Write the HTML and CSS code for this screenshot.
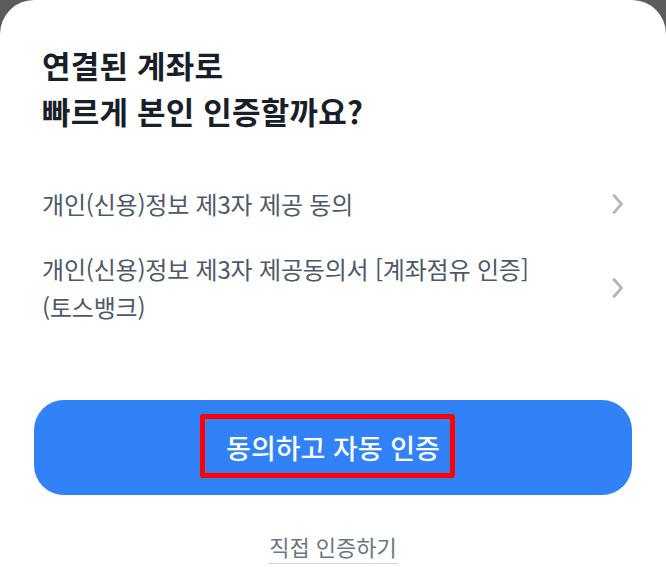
FILE: index.html
```html
<!DOCTYPE html>
<html lang="ko">
<head>
<meta charset="utf-8">
<link rel="stylesheet" href="styles.css">
</head>
<body>
<div class="sheet">
  <h1 class="title">연결된 계좌로<br>빠르게 본인 인증할까요?</h1>
  <ul class="terms">
    <li class="term">
      <span class="term-text">개인(신용)정보 제3자 제공 동의</span>
      <svg class="chev" viewBox="0 0 12 20" width="12" height="20"><path d="M2 1.5 L9.5 10 L2 18.5" fill="none" stroke="#b0b8c1" stroke-width="2.8" stroke-linecap="round" stroke-linejoin="round"/></svg>
    </li>
    <li class="term">
      <span class="term-text">개인(신용)정보 제3자 제공동의서 [계좌점유 인증] (토스뱅크)</span>
      <svg class="chev" viewBox="0 0 12 20" width="12" height="20"><path d="M2 1.5 L9.5 10 L2 18.5" fill="none" stroke="#b0b8c1" stroke-width="2.8" stroke-linecap="round" stroke-linejoin="round"/></svg>
    </li>
  </ul>
  <button class="cta">
    <span class="cta-label">동의하고 자동 인증</span>
    <span class="highlight"></span>
  </button>
  <div class="alt-wrap"><a class="alt">직접 인증하기</a></div>
</div>
</body>
</html>
```

FILE: styles.css
```css
html, body {
  margin: 0;
  padding: 0;
  background: #5c5c5c;
  height: 100%;
  overflow: hidden;
}
body {
  font-family: "Noto Sans CJK KR", "Noto Sans", sans-serif;
}
.sheet {
  background: #ffffff;
  border-radius: 34px 34px 0 0;
  height: 100vh;
  overflow: hidden;
  padding: 42px 34px 0 42px;
  box-sizing: border-box;
  display: flex;
  flex-direction: column;
}
.title {
  margin: 0;
  font-size: 31px;
  line-height: 46px;
  font-weight: 700;
  color: #191f28;
  letter-spacing: 0.2px;
}
.terms {
  list-style: none;
  margin: 51px 0 0 0;
  padding: 0;
  display: flex;
  flex-direction: column;
  gap: 27px;
}
.term {
  display: flex;
  align-items: center;
  justify-content: space-between;
  gap: 20px;
}
.term-text {
  flex: 1;
  font-size: 24px;
  line-height: 38px;
  color: #4e5968;
  word-break: keep-all;
  letter-spacing: -0.2px;
  max-width: 540px;
}
.chev {
  flex: none;
  margin-right: 8px;
}
.cta {
  position: relative;
  flex: none;
  margin: 74px 0 0 -8px;
  height: 95px;
  border: none;
  border-radius: 30px;
  background: #3182f6;
  color: #ffffff;
  font-family: inherit;
  font-size: 27px;
  font-weight: 500;
  letter-spacing: 0;
  display: flex;
  align-items: center;
  justify-content: center;
  padding: 0;
}
.highlight {
  position: absolute;
  left: 166px;
  top: 14px;
  width: 255px;
  height: 64px;
  box-sizing: border-box;
  border: 5px solid #ff0000;
  border-radius: 3px;
}
.alt-wrap {
  flex: none;
  display: flex;
  justify-content: center;
  margin: 37px 0 0 -8px;
}
.alt {
  font-size: 22px;
  line-height: 28px;
  color: #6b7684;
  padding: 0 1px 3px;
  border-bottom: 1px solid #d1d6db;
}
```
